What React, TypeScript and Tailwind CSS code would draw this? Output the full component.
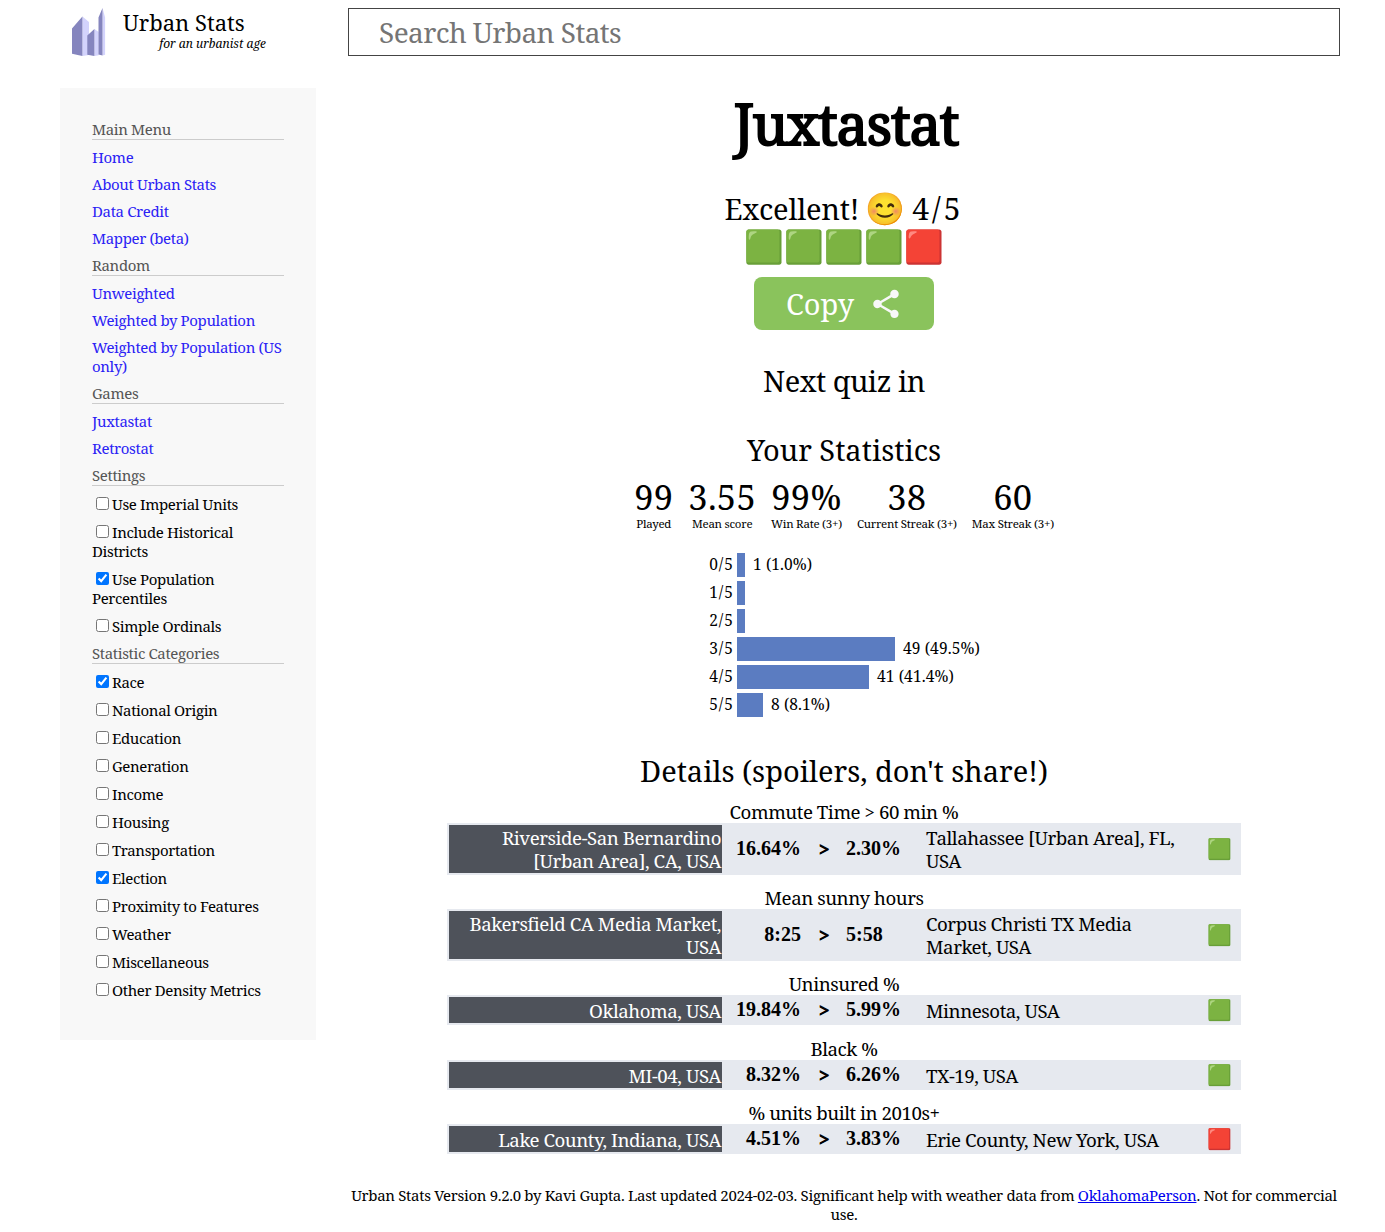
import { MdShare } from "react-icons/md";

type Entry = { kind: "head" | "link" | "check"; text: string; on?: boolean; second?: string };

const head = (text: string): Entry => ({ kind: "head", text });
const link = (text: string, second?: string): Entry => ({ kind: "link", text, second });
const check = (text: string, on = false, second?: string): Entry => ({ kind: "check", text, on, second });

const menu: Entry[] = [
  head("Main Menu"),
  link("Home"),
  link("About Urban Stats"),
  link("Data Credit"),
  link("Mapper (beta)"),
  head("Random"),
  link("Unweighted"),
  link("Weighted by Population"),
  link("Weighted by Population (US", "only)"),
  head("Games"),
  link("Juxtastat"),
  link("Retrostat"),
  head("Settings"),
  check("Use Imperial Units"),
  check("Include Historical", false, "Districts"),
  check("Use Population", true, "Percentiles"),
  check("Simple Ordinals"),
  head("Statistic Categories"),
  check("Race", true),
  check("National Origin"),
  check("Education"),
  check("Generation"),
  check("Income"),
  check("Housing"),
  check("Transportation"),
  check("Election", true),
  check("Proximity to Features"),
  check("Weather"),
  check("Miscellaneous"),
  check("Other Density Metrics"),
];

const stats = [
  ["99", "Played"],
  ["3.55", "Mean score"],
  ["99%", "Win Rate (3+)"],
  ["38", "Current Streak (3+)"],
  ["60", "Max Streak (3+)"],
];

const bars: [string, number, string][] = [
  ["0/5", 8, "1 (1.0%)"],
  ["1/5", 8, ""],
  ["2/5", 8, ""],
  ["3/5", 158, "49 (49.5%)"],
  ["4/5", 132, "41 (41.4%)"],
  ["5/5", 26, "8 (8.1%)"],
];

const rounds = [
  { q: "Commute Time > 60 min %", a: ["Riverside-San Bernardino", "[Urban Area], CA, USA"], x: "16.64%", y: "2.30%", b: ["Tallahassee [Urban Area], FL,", "USA"], ok: true },
  { q: "Mean sunny hours", a: ["Bakersfield CA Media Market,", "USA"], x: "8:25", y: "5:58", b: ["Corpus Christi TX Media", "Market, USA"], ok: true },
  { q: "Uninsured %", a: ["Oklahoma, USA"], x: "19.84%", y: "5.99%", b: ["Minnesota, USA"], ok: true },
  { q: "Black %", a: ["MI-04, USA"], x: "8.32%", y: "6.26%", b: ["TX-19, USA"], ok: true },
  { q: "% units built in 2010s+", a: ["Lake County, Indiana, USA"], x: "4.51%", y: "3.83%", b: ["Erie County, New York, USA"], ok: false },
];

function Logo() {
  return (
    <svg width="34" height="49" viewBox="72 8 34 49" className="shrink-0">
      <path fill="#d3d3fc" d="M82.4 16.6 89 22v33l-6.6 1zM94.4 29l4.3 3v23.300l-4.300.7zM102.500 8l2.600 9.500v37.300l-2.600.7z" />
      <path fill="#8585be" d="M72 28.500 82.400 16.600V56L72 53.800zM87.300 35.500l7.100-6.500v27l-7.100-1.300zM98.500 17.500l4-9.500v47.500l-4-1z" />
    </svg>
  );
}

function MenuItem({ item }: { item: Entry }) {
  if (item.kind === "head") return <div className="h-5 border-b border-[#ccc] text-[#555]">{item.text}</div>;
  if (item.kind === "link")
    return (
      <a className="block text-[#2b22f5]">
        {item.text}
        {item.second && <span className="block">{item.second}</span>}
      </a>
    );
  return (
    <label className="block pt-px">
      <span className="flex h-[19px] items-start">
        <input type="checkbox" defaultChecked={item.on} className="mt-0.5 mr-[3px] ml-1 size-[13px]" />
        {item.text}
      </span>
      {item.second && <span className="block">{item.second}</span>}
    </label>
  );
}

export default function App() {
  return (
    <div className="flex h-[1232px] w-[1385px] gap-8 overflow-hidden bg-white pl-[60px] font-['Noto_Serif',serif] text-[15px] leading-[19px] tracking-[-0.360px] whitespace-nowrap text-black">
      <aside className="w-64 shrink-0">
        <div className="flex h-[88px] gap-[17px] pt-2 pl-3 tracking-normal">
          <Logo />
          <div className="w-[143px]">
            <div className="h-[27px] text-[22px] leading-[29px]">Urban Stats</div>
            <div className="text-right text-[12px] leading-[18px] italic">for an urbanist age</div>
          </div>
        </div>
        <nav className="flex h-[952px] flex-col gap-2 bg-[#f8f8f8] p-8">
          {menu.map((m) => (
            <MenuItem key={m.text} item={m} />
          ))}
        </nav>
      </aside>

      <main className="flex w-[992px] flex-col items-center pt-2">
        <input placeholder="Search Urban Stats" className="h-12 w-full shrink-0 border border-[#444] pl-[30px] text-[28px] tracking-[-0.600px] placeholder:text-[#757575]" />
        <h1 className="mt-[26px] h-20 pl-1 text-[56px] leading-[82px] tracking-[-1.200px] [-webkit-text-stroke:2px_black]">Juxtastat</h1>
        <div className="mt-[28px] flex h-9 items-center text-[29px] leading-9 tracking-[-0.200px]">
          <span className="pt-0.5">Excellent!</span>
          <span className="mr-[7px] ml-[6px] text-[32px] tracking-normal">😊</span>
          <span className="pt-0.5 text-[30px] tracking-[3px]">4/5</span>
        </div>
        <div className="h-[40px] text-[32px] leading-[40px] tracking-normal">🟩🟩🟩🟩🟥</div>
        <button className="mt-[11px] flex h-[53px] w-[180px] shrink-0 items-center rounded-lg bg-[#8ac35c] pl-8 text-[29px] tracking-normal text-white">
          Copy
          <MdShare className="ml-[15px] size-[34px] text-[#f8f8f8]" />
        </button>
        <div className="mt-[31px] h-10 text-[29px] leading-10 tracking-[-0.500px]">Next quiz in</div>
        <div className="mt-[29px] h-10 text-[29px] leading-10 tracking-normal">Your Statistics</div>
        <div className="mt-[5px] flex h-[58px] gap-[15px] tracking-normal">
          {stats.map(([n, l]) => (
            <div key={l} className="text-center">
              <div className="h-[42px] text-[34.500px] leading-[43px] tracking-[0.300px]">{n}</div>
              <div className="text-[11.500px] leading-[14px] tracking-[-0.250px]">{l}</div>
            </div>
          ))}
        </div>
        <div className="mt-[20px] flex w-[278px] flex-col gap-1 text-[15.500px]">
          {bars.map(([l, w, t]) => (
            <div key={l} className="flex h-6 items-center">
              <span className="mr-[3px] w-[29px] pb-px text-right tracking-[1px]">{l}</span>
              <span className="mr-2 h-6 bg-[#5b7cc1]" style={{ width: w }} />
              <span className="pb-px tracking-[0.100px]">{t}</span>
            </div>
          ))}
        </div>
        <div className="mt-[34px] h-10 text-[29px] leading-10 tracking-normal">Details (spoilers, don't share!)</div>
        <div className="mt-[9px] flex w-[794px] flex-col gap-[11px] text-[18.700px] leading-[23px] tracking-[-0.450px]">
          {rounds.map((r) => (
            <section key={r.q} className="nth-3:mb-px">
              <div className="h-[23px] text-center">{r.q}</div>
              <div className="grid min-h-[30px] grid-cols-[273px_81px_43px_80px_auto_32px] items-center border-2 border-[#e6e9ef] bg-[#e6e9ef]">
                <div className="flex flex-col justify-end self-stretch bg-[#4e525a] py-px pr-px text-right text-white">
                  {r.a.map((t) => (
                    <div key={t}>{t}</div>
                  ))}
                </div>
                <b className="pr-0.5 pb-px text-right font-['Liberation_Serif'] text-[20px] tracking-normal">{r.x}</b>
                <span className="pb-0.5 pl-4 [-webkit-text-stroke:1px_black]">&gt;</span>
                <b className="pb-px font-['Liberation_Serif'] text-[20px] tracking-normal">{r.y}</b>
                <div className="py-px">
                  {r.b.map((t) => (
                    <div key={t}>{t}</div>
                  ))}
                </div>
                <span className="pb-0.5 text-[20px] tracking-normal">{r.ok ? "🟩" : "🟥"}</span>
              </div>
            </section>
          ))}
        </div>
        <footer className="mt-8 text-center tracking-[-0.320px]">
          Urban Stats Version 9.2.0 by Kavi Gupta. Last updated 2024-02-03. Significant help with weather data from{" "}
          <a className="text-[#0000ee] underline">OklahomaPerson</a>. Not for commercial
          <br />
          use.
        </footer>
      </main>
    </div>
  );
}
